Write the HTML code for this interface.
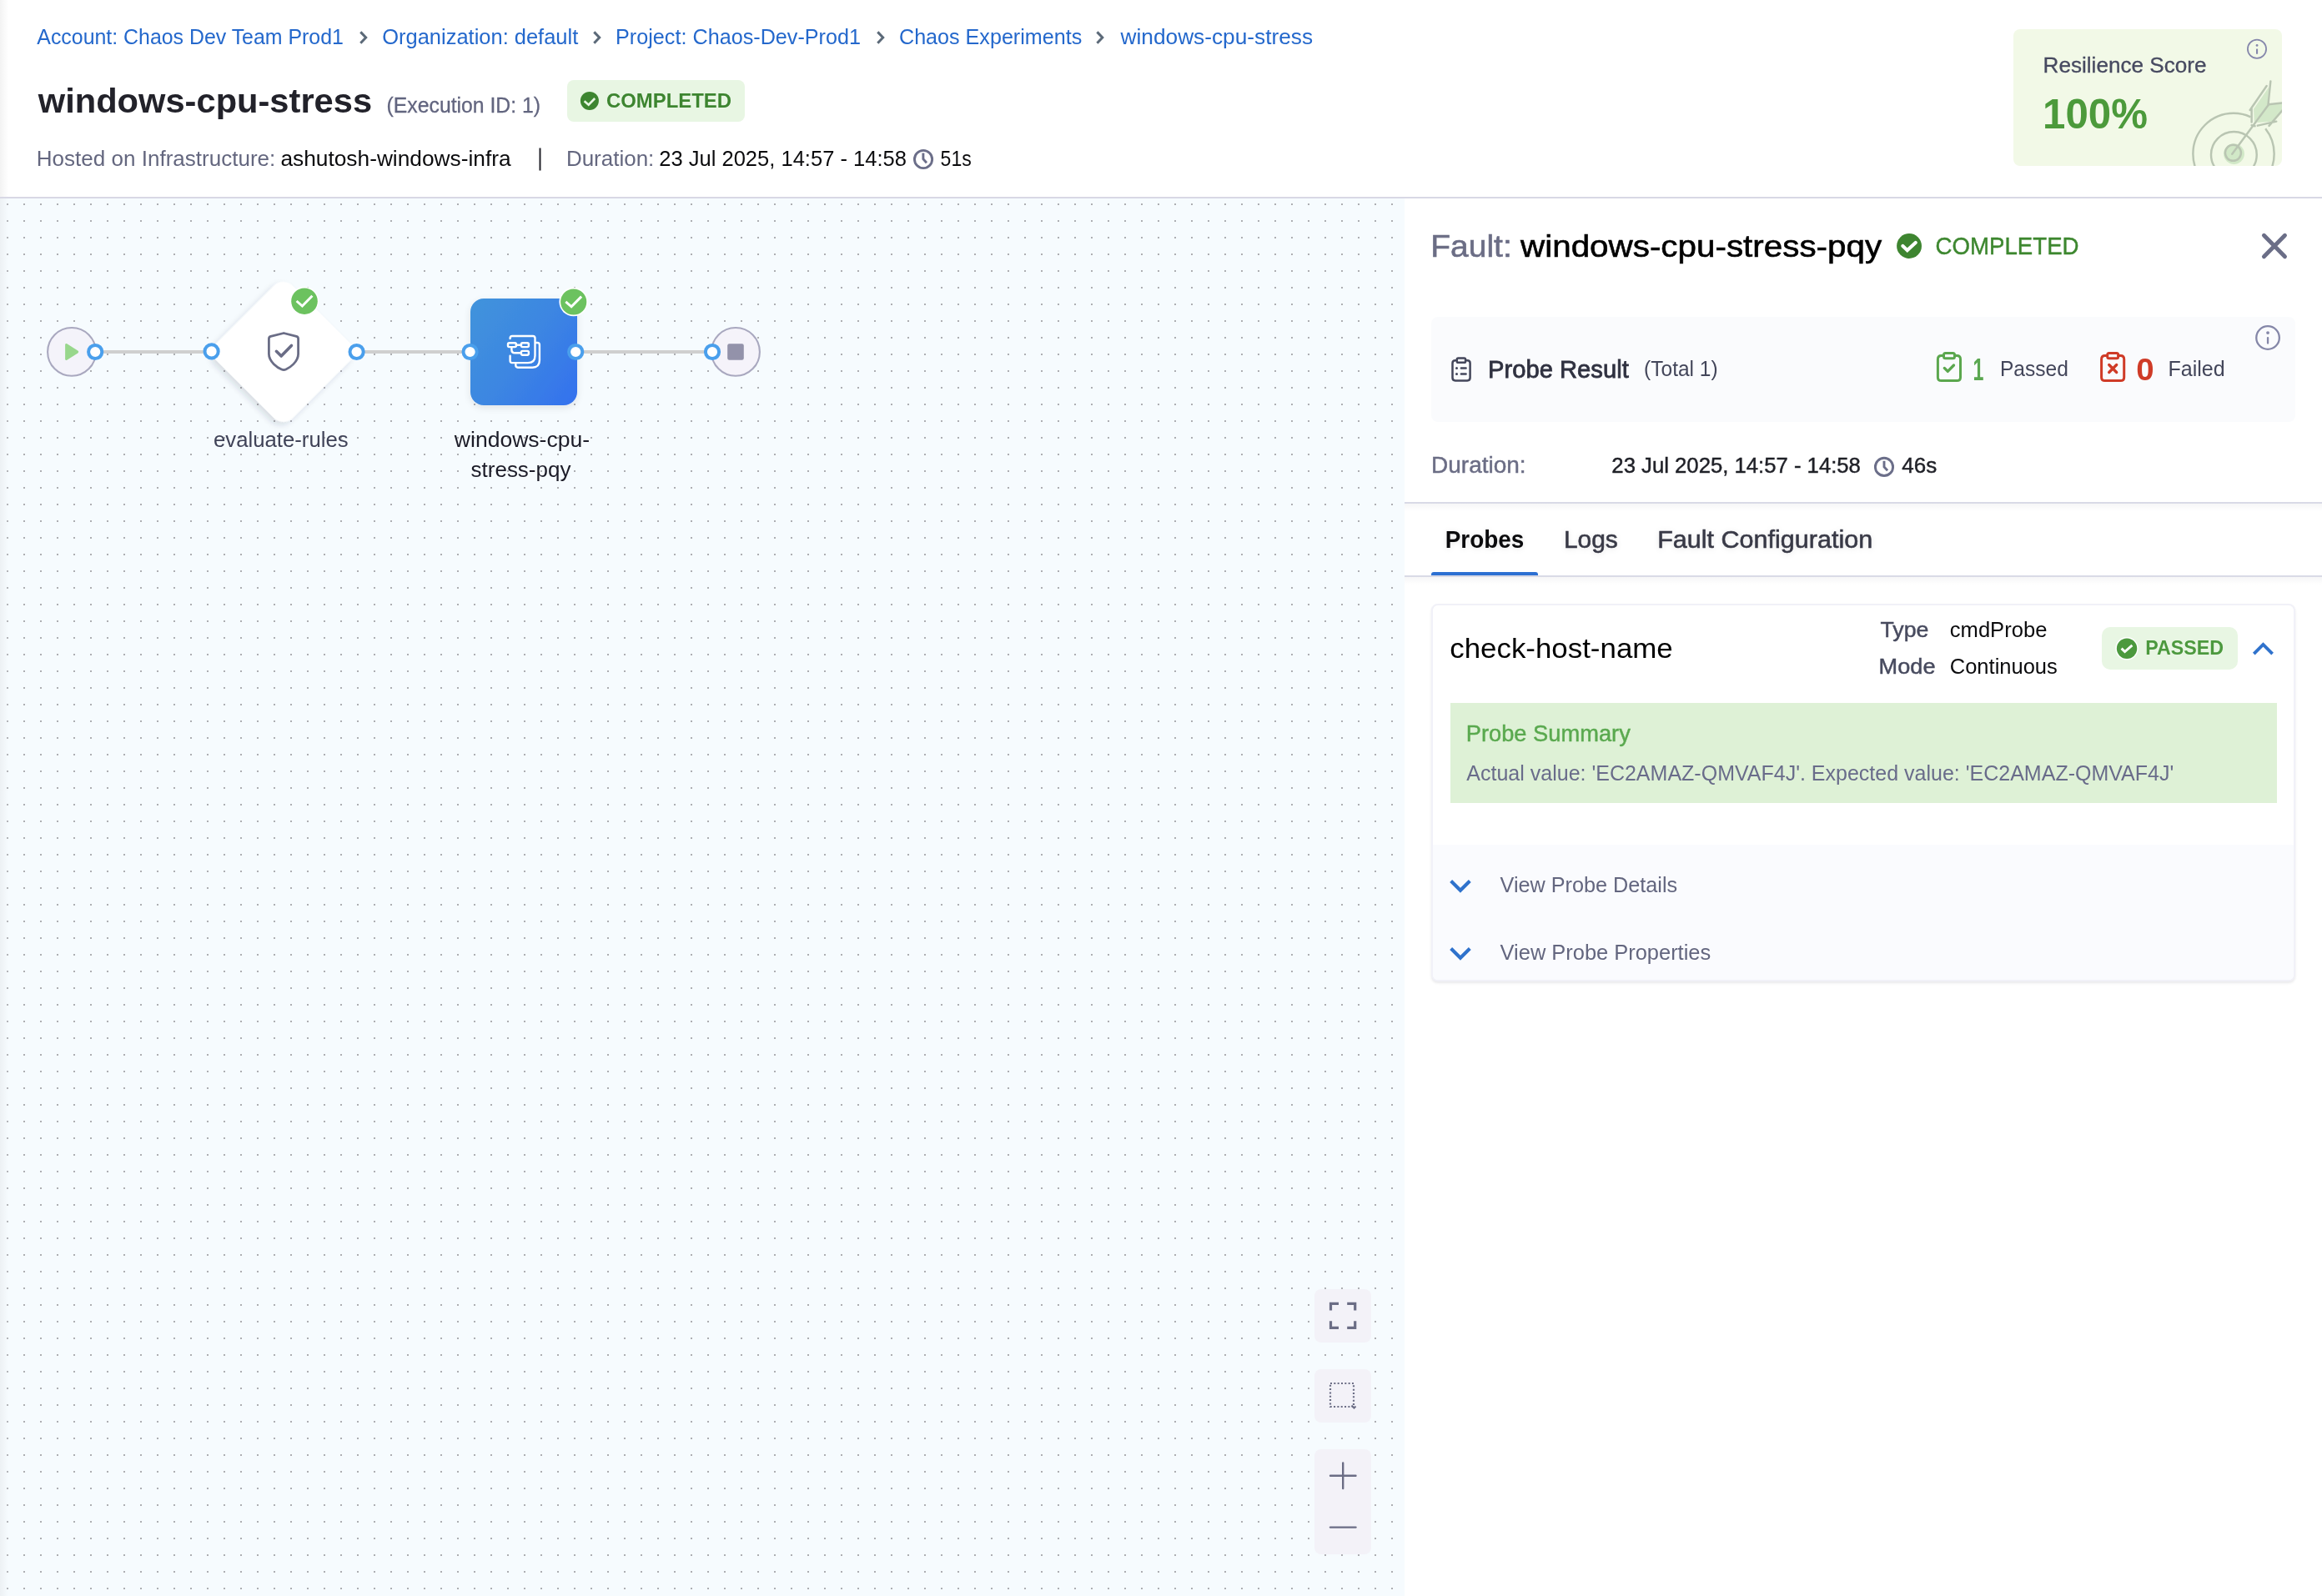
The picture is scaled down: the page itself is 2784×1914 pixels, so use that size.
<!DOCTYPE html>
<html lang="en">
<head>
<meta charset="utf-8">
<title>windows-cpu-stress</title>
<style>
html,body{margin:0;padding:0;background:#fff;}
body{width:2784px;height:1914px;overflow:hidden;font-family:"Liberation Sans",sans-serif;}
#root{position:relative;width:2784px;height:1914px;overflow:hidden;background:#fff;}
#root>*{position:absolute;}
svg{display:block;overflow:visible;}
#canvas{left:0;top:238px;width:1684px;height:1676px;background-color:#f6fbfe;}
#dots{left:0;top:238px;}
#hdrline{left:0;top:236px;width:2784px;height:2px;background:#d8d8e5;}
#edge1{left:0;top:0;width:10px;height:236px;background:linear-gradient(90deg,#f3f3f3,#fff);}
#edge2{left:0;top:238px;width:10px;height:1676px;background:linear-gradient(90deg,#edf1f4,rgba(246,251,254,0));}
#panel{left:1684px;top:238px;width:1100px;height:1676px;background:#fff;}
.badge{background:#e8f6e3;border-radius:8px;}
#rcard{left:2414px;top:35px;width:322px;height:164px;background:#f2f9e7;border-radius:8px;overflow:hidden;}
#pbox{left:1716px;top:380px;width:1036px;height:126px;background:#fafbfd;border-radius:8px;}
.hl{background:#d9dae6;height:2px;}
#tabul{left:1716px;top:686px;width:128px;height:4px;background:#2d70d2;border-radius:3px 3px 0 0;}
#card{left:1716px;top:724px;width:1036px;height:453px;background:#fff;border-radius:8px;box-sizing:border-box;border:2px solid #f1f1f8;box-shadow:0 2px 3px rgba(40,41,61,.10);}
#gbox{left:1738.5px;top:843px;width:991.5px;height:120px;background:#def1d6;}
#gsec{left:1718px;top:1012.5px;width:1032px;height:162.5px;background:#fafbfe;border-radius:0 0 6px 6px;}
.btn{background:#f3f2f8;border-radius:8px;left:1576px;width:68px;}
.sh{height:9px;background:linear-gradient(#f6f6f7,#fff);left:1684px;width:1100px;}
.ts{filter:drop-shadow(0 1px 3px rgba(0,0,0,.10));}
@media (min-width:1385px) and (max-width:1399px) and (-webkit-min-device-pixel-ratio:1.5){html{zoom:.5;}}

</style>
</head>
<body>
<div id="root">
<div id="edge1"></div>
<div id="hdrline"></div>
<div id="canvas"></div>
<svg id="dots" width="1684" height="1676"><defs><pattern id="dp" x="8" y="6" width="20" height="20" patternUnits="userSpaceOnUse"><rect width="2" height="2" fill="#adaeb2"/></pattern></defs><rect width="1684" height="1676" fill="url(#dp)"/></svg>
<div id="edge2"></div>
<div id="panel"></div>

<!-- header badge -->
<div class="badge" style="left:680px;top:96px;width:213px;height:50px;"></div>
<!-- resilience card -->
<div id="rcard">
<svg width="322" height="164" viewBox="2414 35 322 164">
 <g transform="translate(2620 90) scale(0.072062)">
  <circle cx="812" cy="1312" r="172" fill="#d1e8c7"/>
  <path d="M1138 565 L1388 205 L1376 492 L1150 792 Z" fill="#d3e8c9"/>
  <path d="M1386 496 L1640 474 L1640 560 L1445 772 L1192 792 Z" fill="#d3e8c9"/>
  <g fill="none" stroke="#b9c5b2" stroke-width="34" stroke-linecap="round" stroke-linejoin="round">
   <circle cx="805" cy="1310" r="675" stroke-dasharray="3469 314.5 457.5 0" stroke-linecap="butt"/>
   <circle cx="810" cy="1325" r="380"/>
   <circle cx="797" cy="1295" r="132"/>
   <path d="M780 1315 L1390 490"/>
   <path d="M1105 785 V560 M1078 582 L1355 180 M1420 103 L1381 488 L1640 462 M1640 560 L1395 845 M1205 842 L1515 772"/>
   <path d="M1105 835 L1160 850"/>
  </g>
 </g>
</svg>
</div>
<!-- panel boxes -->
<div id="pbox"></div>
<div class="sh" style="top:604px;"></div>
<div class="sh" style="top:692px;"></div>
<div class="hl" style="left:1684px;top:602px;width:1100px;"></div>
<div class="hl" style="left:1684px;top:690px;width:1100px;"></div>
<div id="tabul"></div>
<div id="card"></div>
<div id="gbox"></div>
<div id="gsec"></div>
<div class="badge" style="left:2520px;top:752px;width:163px;height:51px;border-radius:10px;"></div>
<!-- canvas buttons -->
<div class="btn" style="top:1546px;height:64px;"></div>
<div class="btn" style="top:1642px;height:64px;"></div>
<div class="btn" style="top:1738px;height:126px;"></div>

<!-- all vector graphics in one overlay svg using page coordinates -->
<svg id="gfx" style="left:0;top:0" width="2784" height="1914" viewBox="0 0 2784 1914">
<defs>
 <linearGradient id="bluegrad" x1="0" y1="0.15" x2="1" y2="0.85">
  <stop offset="0" stop-color="#4192dc"/><stop offset="0.5" stop-color="#3c86e2"/><stop offset="1" stop-color="#3573ed"/>
 </linearGradient>
 <filter id="sh" x="-30%" y="-30%" width="160%" height="160%">
  <feGaussianBlur in="SourceAlpha" stdDeviation="5"/><feOffset dy="3"/>
  <feComponentTransfer><feFuncA type="linear" slope="0.10"/></feComponentTransfer>
  <feMerge><feMergeNode/><feMergeNode in="SourceGraphic"/></feMerge>
 </filter>
 <filter id="sh2" x="-30%" y="-30%" width="160%" height="160%">
  <feGaussianBlur in="SourceAlpha" stdDeviation="3.6" result="b"/>
  <feOffset in="b" dy="5" result="o"/>
  <feFlood flood-color="#28304a" flood-opacity="0.15" result="c"/>
  <feComposite in="c" in2="o" operator="in" result="s"/>
  <feMerge><feMergeNode in="s"/><feMergeNode in="SourceGraphic"/></feMerge>
 </filter>
</defs>

<!-- breadcrumb chevrons -->
<g fill="none" stroke="#5b6978" stroke-width="3" stroke-linecap="butt" stroke-linejoin="miter">
 <path d="M432.3 38.4 L438.7 45.05 L432.3 51.7"/>
 <path d="M712.3 38.4 L718.7 45.05 L712.3 51.7"/>
 <path d="M1052.3 38.4 L1058.7 45.05 L1052.3 51.7"/>
 <path d="M1315.4 38.4 L1321.8 45.05 L1315.4 51.7"/>
</g>
<!-- header completed icon -->
<circle cx="706.9" cy="120.9" r="11" fill="#3d8530"/>
<path d="M700.6 121.2 L705.7 125.7 L713.2 118" fill="none" stroke="#e8f6e3" stroke-width="2.6" stroke-linecap="butt" stroke-linejoin="miter"/>
<!-- separator -->
<rect x="646.5" y="177.5" width="2" height="27" fill="#22222a"/>
<!-- header clock -->
<g fill="none" stroke="#6b6e89" stroke-width="2.9" stroke-linecap="butt" stroke-linejoin="miter">
 <circle cx="1107.05" cy="191" r="10.6"/>
 <path d="M1106.9 183.6 V190.8 L1111 195.2"/>
</g>
<!-- resilience info icon -->
<g>
 <circle cx="2706" cy="58.8" r="11.1" fill="none" stroke="#8587ab" stroke-width="1.8"/>
 <rect x="2705" y="58.4" width="2.1" height="6.4" rx="0.6" fill="#8587ab"/>
 <circle cx="2706.05" cy="54.4" r="1.4" fill="#8587ab"/>
</g>

<!-- ===== canvas graph ===== -->
<g stroke="#cfcfcf" stroke-width="4">
 <path d="M114 422 H254"/><path d="M427 422 H563"/><path d="M690 422 H854"/>
</g>
<!-- start node -->
<circle cx="86" cy="421.9" r="28.9" fill="#f4f3fa" stroke="#a9a8bf" stroke-width="2.1"/>
<path d="M80.3 412.3 Q78.1 411.2 78.1 413.8 V430.2 Q78.1 432.8 80.3 431.7 L93.3 423.4 Q95.2 422 93.3 420.6 Z" fill="#98d78c"/>
<!-- end node -->
<circle cx="882" cy="421.9" r="28.9" fill="#f5f3fa" stroke="#a9a8bf" stroke-width="2.1"/>
<rect x="872.2" y="412.2" width="19.6" height="19.6" rx="2.2" fill="#9392aa"/>
<!-- diamond -->
<rect x="275.8" y="357.9" width="128" height="128" rx="16" transform="rotate(45 339.8 421.9)" fill="#fff" filter="url(#sh2)"/>
<!-- shield -->
<g fill="none" stroke="#6a6d86" stroke-linecap="round" stroke-linejoin="round">
 <path stroke-width="2.8" d="M340.2 399.5 L324.6 403.4 Q322.4 404 322.4 406.3 V424.5 C322.4 434 333.2 441.2 337.6 443 Q340.2 444.1 342.8 443 C347.2 441.2 357.6 434 357.6 424.5 V406.3 Q357.6 404 355.4 403.4 Z"/>
 <path stroke-width="3.6" d="M331.4 421.3 L337.2 427 L349.4 414.4"/>
</g>
<!-- blue node -->
<g filter="url(#sh)">
 <rect x="564" y="358" width="128" height="128" rx="16" fill="url(#bluegrad)"/>
</g>
<g fill="none" stroke="#fff" stroke-width="2.4" stroke-linecap="round" stroke-linejoin="round" transform="translate(596 390)">
 <path d="M15.6 16 V15.6 Q15.6 13 18.2 13 H42.9 Q45.5 13 45.5 15.6 V36.5 Q45.5 45.1 36.9 45.1 H18 Q15.6 45.1 15.6 42.7 V36.7"/>
 <path d="M46.7 21 H48.3 Q50.9 21 50.9 23.6 V42.1 Q50.9 50.7 42.3 50.7 H24.9 Q22.3 50.7 22.3 48.1 V46.5"/>
 <rect x="13" y="21.3" width="9.9" height="4.8" rx="1.6"/>
 <rect x="28.9" y="21.3" width="9" height="4.8" rx="1.6"/>
 <rect x="28.9" y="30.9" width="9" height="4.8" rx="1.6"/>
 <path d="M22.9 23.7 H28.9"/>
 <path d="M17.4 26.1 V29.3 Q17.4 33.3 21.4 33.3 H28.9"/>
</g>
<!-- ports -->
<g fill="#fff" stroke="#4a9fec" stroke-width="4">
 <circle cx="114.2" cy="422" r="8.1"/><circle cx="253.6" cy="421.4" r="8.1"/><circle cx="427.6" cy="422" r="8.1"/>
 <circle cx="563.6" cy="422" r="8.1"/><circle cx="690.2" cy="422" r="8.1"/><circle cx="854" cy="422" r="8.1"/>
</g>
<!-- status badges -->
<circle cx="365" cy="361.2" r="17.3" fill="#fff"/>
<circle cx="365" cy="361.2" r="15.8" fill="#6cc25f"/>
<path d="M355.6 361 L362.4 367 L374.4 354.8" fill="none" stroke="#fff" stroke-width="3" stroke-linecap="butt" stroke-linejoin="miter"/>
<circle cx="687.7" cy="362" r="17.3" fill="#fff"/>
<circle cx="687.7" cy="362" r="15.6" fill="#6cc25f"/>
<path d="M678.3 361.8 L685.1 367.8 L697.1 355.6" fill="none" stroke="#fff" stroke-width="3" stroke-linecap="butt" stroke-linejoin="miter"/>

<!-- canvas buttons icons -->
<g fill="none" stroke="#6b6d85">
 <path stroke-width="3.2" d="M1595.5 1571.5 V1563.3 H1605 M1615.2 1563.3 H1624.7 V1571.5 M1624.7 1584.2 V1592.3 H1615.2 M1605 1592.3 H1595.5 V1584.2"/>
 <rect x="1595" y="1659" width="28" height="28" stroke-width="2.2" stroke-dasharray="2 2.33"/>
 <path stroke-width="2" d="M1620.5 1685.5 l3 3 l2 -2"/>
 <path stroke-width="2.4" stroke-linecap="round" d="M1595 1769.8 H1625.5 M1610.2 1754.5 V1785"/>
 <path stroke-width="2.4" stroke-linecap="round" d="M1595 1831.6 H1625.5"/>
</g>

<!-- ===== panel ===== -->
<circle cx="2289.05" cy="295" r="14.95" fill="#3e8530"/>
<path d="M2281.4 294.9 L2286.8 300.1 L2296.7 290.9" fill="none" stroke="#fff" stroke-width="4.1" stroke-linecap="round" stroke-linejoin="miter"/>
<path d="M2714.4 282.3 L2739.5 307.7 M2739.5 282.3 L2714.4 307.7" fill="none" stroke="#6b6e87" stroke-width="4.9" stroke-linecap="round"/>
<!-- probe result clipboard -->
<g fill="none" stroke="#44475b" stroke-width="2.5" stroke-linecap="round" stroke-linejoin="round" transform="translate(1728 416)">
 <path d="M18.8 16.3 H16.8 Q13.5 16.3 13.5 19.6 V37.1 Q13.5 40.4 16.8 40.4 H31.3 Q34.6 40.4 34.6 37.1 V19.6 Q34.6 16.3 31.3 16.3 H29.1"/>
 <rect x="18.8" y="13.5" width="10.3" height="5.3" rx="1.6"/>
 <path d="M23.9 25.5 H29.6 M23.9 32.4 H29.6"/>
 <path d="M18.5 25.5 h0.01 M18.5 32.4 h0.01" stroke-width="3"/>
</g>
<!-- green clipboard -->
<g fill="none" stroke="#5ba74e" stroke-width="3" stroke-linecap="round" stroke-linejoin="round" transform="translate(2312 412)">
 <path d="M18.5 14.6 H15.6 Q11.4 14.6 11.4 18.8 V40.4 Q11.4 44.6 15.6 44.6 H34.3 Q38.5 44.6 38.5 40.4 V18.8 Q38.5 14.6 34.3 14.6 H31.5"/>
 <rect x="18.5" y="11.6" width="13" height="6.1" rx="2"/>
 <path d="M19.3 29.4 L23.3 33.4 L30.5 26" stroke-width="3.3"/>
</g>
<!-- red clipboard -->
<g fill="none" stroke="#cf3b27" stroke-width="3" stroke-linecap="round" stroke-linejoin="round" transform="translate(2508.2 412)">
 <path d="M18.5 14.6 H15.6 Q11.4 14.6 11.4 18.8 V40.4 Q11.4 44.6 15.6 44.6 H34.3 Q38.5 44.6 38.5 40.4 V18.8 Q38.5 14.6 34.3 14.6 H31.5"/>
 <rect x="18.5" y="11.6" width="13" height="6.1" rx="2"/>
 <path d="M20.5 25.5 L29.5 34.5 M29.5 25.5 L20.5 34.5" stroke-width="3.3"/>
</g>
<!-- probe info icon -->
<g>
 <circle cx="2719.05" cy="405" r="13.8" fill="none" stroke="#8587a8" stroke-width="2.3"/>
 <rect x="2717.9" y="404" width="2.3" height="8.7" rx="1.1" fill="#8587a8"/>
 <circle cx="2719.05" cy="399.1" r="1.9" fill="#8587a8"/>
</g>
<!-- duration clock -->
<g fill="none" stroke="#6b6e89" stroke-width="2.9" stroke-linecap="butt" stroke-linejoin="miter">
 <circle cx="2259" cy="559.9" r="10.6"/>
 <path d="M2259 552.7 V559.9 L2263.1 564.2"/>
</g>
<!-- passed badge icon -->
<circle cx="2550" cy="777.75" r="13.7" fill="#fff"/>
<circle cx="2550.05" cy="777.75" r="12.2" fill="#4c993e"/>
<path d="M2543.6 777.6 L2547.6 781.6 L2556.4 773.9" fill="none" stroke="#fff" stroke-width="2.9" stroke-linecap="butt" stroke-linejoin="miter"/>
<!-- chevrons -->
<g fill="none" stroke="#2f72cc" stroke-linecap="butt" stroke-linejoin="miter">
 <path stroke-width="3.8" d="M2702.3 784.1 L2713.45 772.95 L2724.6 784.1"/>
 <path stroke-width="4.1" d="M1739.65 1056.55 L1750.95 1067.8 L1762.3 1056.55"/>
 <path stroke-width="4.1" d="M1739.65 1137.55 L1750.95 1148.8 L1762.3 1137.55"/>
</g>
</svg>

<!-- text -->
<svg id="txt" style="left:0;top:0;will-change:transform" width="2784" height="1914" viewBox="0 0 2784 1914" font-family="Liberation Sans, sans-serif">
<text x="44.30" y="53" font-size="25" fill="#2468cc" textLength="367.60" lengthAdjust="spacingAndGlyphs">Account: Chaos Dev Team Prod1</text>
<text x="458.28" y="53" font-size="25" fill="#2468cc" textLength="234.96" lengthAdjust="spacingAndGlyphs">Organization: default</text>
<text x="738.09" y="53" font-size="25" fill="#2468cc" textLength="293.93" lengthAdjust="spacingAndGlyphs">Project: Chaos-Dev-Prod1</text>
<text x="1078.00" y="53" font-size="25" fill="#2468cc" textLength="219.21" lengthAdjust="spacingAndGlyphs">Chaos Experiments</text>
<text x="1343.55" y="53" font-size="25" fill="#2468cc" textLength="230.48" lengthAdjust="spacingAndGlyphs">windows-cpu-stress</text>
<text x="45.80" y="135" font-size="41.5" fill="#22222a" textLength="400.28" lengthAdjust="spacingAndGlyphs" font-weight="700">windows-cpu-stress</text>
<text x="463.61" y="135" font-size="25" fill="#62657f" textLength="184.40" lengthAdjust="spacingAndGlyphs" stroke="#62657f" stroke-width="0.3">(Execution ID: 1)</text>
<text x="727.00" y="129" font-size="24" fill="#3d8530" textLength="150.03" lengthAdjust="spacingAndGlyphs" font-weight="700">COMPLETED</text>
<text x="43.82" y="199" font-size="25" fill="#64677f" textLength="286.51" lengthAdjust="spacingAndGlyphs">Hosted on Infrastructure:</text>
<text x="336.45" y="199" font-size="25" fill="#0b0b0d" textLength="276.15" lengthAdjust="spacingAndGlyphs">ashutosh-windows-infra</text>
<text x="678.92" y="199" font-size="25" fill="#64677f" textLength="105.40" lengthAdjust="spacingAndGlyphs">Duration:</text>
<text x="790.28" y="199" font-size="25" fill="#0b0b0d" textLength="296.64" lengthAdjust="spacingAndGlyphs">23 Jul 2025, 14:57 - 14:58</text>
<text x="1127.58" y="199" font-size="25" fill="#0b0b0d" textLength="37.18" lengthAdjust="spacingAndGlyphs">51s</text>
<text x="2449.61" y="87" font-size="25" fill="#474a60" textLength="195.83" lengthAdjust="spacingAndGlyphs" stroke="#474a60" stroke-width="0.3">Resilience Score</text>
<text x="2449.05" y="154" font-size="50" fill="#4c9a3b" textLength="125.90" lengthAdjust="spacingAndGlyphs" font-weight="700">100%</text>
<text x="1715.34" y="308" font-size="37" fill="#6b6d85" textLength="97.41" lengthAdjust="spacingAndGlyphs" stroke="#6b6d85" stroke-width="0.6">Fault:</text>
<text x="1823.09" y="308" font-size="37" fill="#000" textLength="433.06" lengthAdjust="spacingAndGlyphs" stroke="#000" stroke-width="0.6">windows-cpu-stress-pqy</text>
<text x="2320.55" y="305" font-size="29" fill="#3d872f" textLength="172.05" lengthAdjust="spacingAndGlyphs" stroke="#3d872f" stroke-width="0.4">COMPLETED</text>
<text x="1783.99" y="453" font-size="29" fill="#2f3140" textLength="168.77" lengthAdjust="spacingAndGlyphs" stroke="#2f3140" stroke-width="0.8">Probe Result</text>
<text x="1971.12" y="451" font-size="25" fill="#43465a" textLength="88.48" lengthAdjust="spacingAndGlyphs">(Total 1)</text>
<text x="2365.44" y="456" font-size="37" fill="#5aa750" textLength="12.92" lengthAdjust="spacingAndGlyphs" font-weight="700">1</text>
<text x="2397.93" y="451" font-size="25" fill="#43465a" textLength="81.95" lengthAdjust="spacingAndGlyphs">Passed</text>
<text x="2561.26" y="456" font-size="37" fill="#cf3b27" textLength="21.34" lengthAdjust="spacingAndGlyphs" font-weight="700">0</text>
<text x="2599.50" y="451" font-size="25" fill="#43465a" textLength="68.21" lengthAdjust="spacingAndGlyphs">Failed</text>
<text x="1716.03" y="567" font-size="27" fill="#6b6d85" textLength="113.63" lengthAdjust="spacingAndGlyphs" stroke="#6b6d85" stroke-width="0.45">Duration:</text>
<text x="1932.37" y="567" font-size="25" fill="#1f2027" textLength="298.56" lengthAdjust="spacingAndGlyphs" stroke="#1f2027" stroke-width="0.45">23 Jul 2025, 14:57 - 14:58</text>
<text x="2280.30" y="567" font-size="25" fill="#1f2027" textLength="41.92" lengthAdjust="spacingAndGlyphs" stroke="#1f2027" stroke-width="0.45">46s</text>
<text x="1732.74" y="657" font-size="29" fill="#0b0b0d" textLength="94.44" lengthAdjust="spacingAndGlyphs" font-weight="700" class="ts">Probes</text>
<text x="1874.94" y="657" font-size="29" fill="#383946" textLength="64.88" lengthAdjust="spacingAndGlyphs" stroke="#383946" stroke-width="0.55" class="ts">Logs</text>
<text x="1987.19" y="657" font-size="29" fill="#383946" textLength="257.99" lengthAdjust="spacingAndGlyphs" stroke="#383946" stroke-width="0.55" class="ts">Fault Configuration</text>
<text x="1738.24" y="789" font-size="33" fill="#000" textLength="267.49" lengthAdjust="spacingAndGlyphs">check-host-name</text>
<text x="2254.50" y="764" font-size="25" fill="#474a5e" textLength="57.86" lengthAdjust="spacingAndGlyphs" stroke="#474a5e" stroke-width="0.45">Type</text>
<text x="2337.78" y="764" font-size="25" fill="#0b0b0d" textLength="116.65" lengthAdjust="spacingAndGlyphs">cmdProbe</text>
<text x="2252.63" y="808" font-size="25" fill="#474a5e" textLength="67.85" lengthAdjust="spacingAndGlyphs" stroke="#474a5e" stroke-width="0.45">Mode</text>
<text x="2337.78" y="808" font-size="25" fill="#0b0b0d" textLength="129.03" lengthAdjust="spacingAndGlyphs">Continuous</text>
<text x="2572.15" y="785" font-size="24.5" fill="#4c993e" textLength="93.81" lengthAdjust="spacingAndGlyphs" font-weight="700">PASSED</text>
<text x="1757.78" y="889" font-size="27" fill="#5aa94f" textLength="197.01" lengthAdjust="spacingAndGlyphs" stroke="#5aa94f" stroke-width="0.45">Probe Summary</text>
<text x="1758.30" y="936" font-size="25" fill="#696c8a" textLength="847.97" lengthAdjust="spacingAndGlyphs">Actual value: 'EC2AMAZ-QMVAF4J'. Expected value: 'EC2AMAZ-QMVAF4J'</text>
<text x="1798.60" y="1070" font-size="25" fill="#63667f" textLength="212.60" lengthAdjust="spacingAndGlyphs">View Probe Details</text>
<text x="1798.60" y="1151" font-size="25" fill="#63667f" textLength="252.61" lengthAdjust="spacingAndGlyphs">View Probe Properties</text>
<text x="255.97" y="536" font-size="25" fill="#404358" textLength="161.64" lengthAdjust="spacingAndGlyphs">evaluate-rules</text>
<text x="544.86" y="536" font-size="25" fill="#1c1c28" textLength="162.18" lengthAdjust="spacingAndGlyphs">windows-cpu-</text>
<text x="564.60" y="572" font-size="25" fill="#1c1c28" textLength="119.78" lengthAdjust="spacingAndGlyphs">stress-pqy</text>
</svg>
</div>
</body>
</html>
